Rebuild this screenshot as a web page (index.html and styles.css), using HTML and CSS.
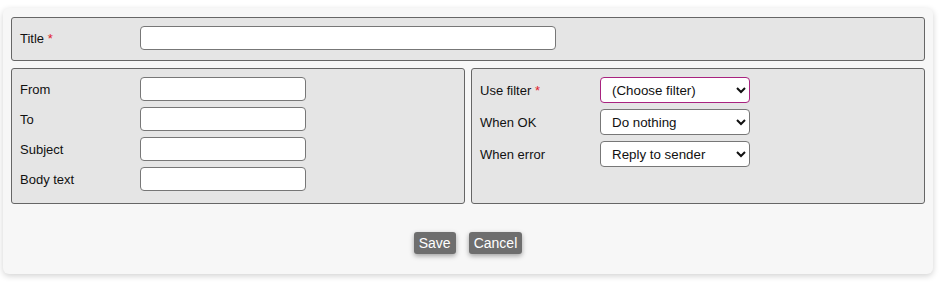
FILE: index.html
```html
<!DOCTYPE html>
<html lang="en">
<head>
    <meta charset="UTF-8">
    <meta name="viewport" content="width=device-width, initial-scale=1.0">
    <title>Mail rule</title>
    <link rel="stylesheet" href="styles.css">
</head>
<body>
    <div class="card">
        <div class="panel title-panel">
            <div class="row">
                <label class="label" for="title">Title <span class="req">*</span></label>
                <input type="text" id="title" class="wide">
            </div>
        </div>

        <div class="columns">
            <div class="panel">
                <div class="row">
                    <label class="label" for="from">From</label>
                    <input type="text" id="from">
                </div>
                <div class="row">
                    <label class="label" for="to">To</label>
                    <input type="text" id="to">
                </div>
                <div class="row">
                    <label class="label" for="subject">Subject</label>
                    <input type="text" id="subject">
                </div>
                <div class="row">
                    <label class="label" for="body">Body text</label>
                    <input type="text" id="body">
                </div>
            </div>

            <div class="panel">
                <div class="row">
                    <label class="label" for="filter">Use filter <span class="req">*</span></label>
                    <select id="filter" class="invalid">
                        <option>(Choose filter)</option>
                    </select>
                </div>
                <div class="row">
                    <label class="label" for="ok">When OK</label>
                    <select id="ok">
                        <option>Do nothing</option>
                    </select>
                </div>
                <div class="row">
                    <label class="label" for="error">When error</label>
                    <select id="error">
                        <option>Reply to sender</option>
                    </select>
                </div>
            </div>
        </div>

        <div class="buttons">
            <button>Save</button>
            <button>Cancel</button>
        </div>
    </div>
</body>
</html>
```

FILE: styles.css
```css
body {
    margin: 0;
    padding: 8px 10px 10px 3px;
    background: #fff;
    font-family: Arial, "Liberation Sans", sans-serif;
    font-size: 13px;
    color: #111;
}
.card {
    background: #f7f7f7;
    border-radius: 6px;
    box-shadow: 0 2px 6px rgba(0, 0, 0, 0.18);
    padding: 9px 8px 20px;
}
.panel {
    background: #e5e5e5;
    border: 1px solid #666;
    border-radius: 3px;
    padding: 8px 8px 12px;
    display: flex;
    flex-direction: column;
    gap: 6px;
}
.title-panel {
    padding-bottom: 10px;
}
.columns {
    display: grid;
    grid-template-columns: 1fr 1fr;
    gap: 6px;
    margin-top: 7px;
}
.row {
    display: flex;
    align-items: center;
}
.label {
    width: 120px;
    flex: none;
}
.req {
    color: #e0202a;
}
input {
    box-sizing: border-box;
    width: 166px;
    height: 24px;
    border: 1px solid #777;
    border-radius: 4px;
    background: #fff;
    margin: 0;
}
input.wide {
    width: 416px;
}
select {
    box-sizing: border-box;
    width: 150px;
    height: 26px;
    border: 1px solid #777;
    border-radius: 4px;
    background: #fff;
    font-family: Arial, "Liberation Sans", sans-serif;
    font-size: 13.33px;
    color: #111;
    padding: 0 7px;
    margin: 0;
}
select.invalid {
    border-color: #a8237f;
}
.buttons {
    display: flex;
    justify-content: center;
    gap: 13px;
    margin-top: 28px;
}
button {
    background: #6e6e6e;
    color: #fff;
    border: none;
    border-radius: 3px;
    box-shadow: 0 2px 5px rgba(0, 0, 0, 0.35);
    font-family: Arial, "Liberation Sans", sans-serif;
    font-size: 14px;
    height: 22px;
    padding: 0 5px;
    cursor: pointer;
}
```
